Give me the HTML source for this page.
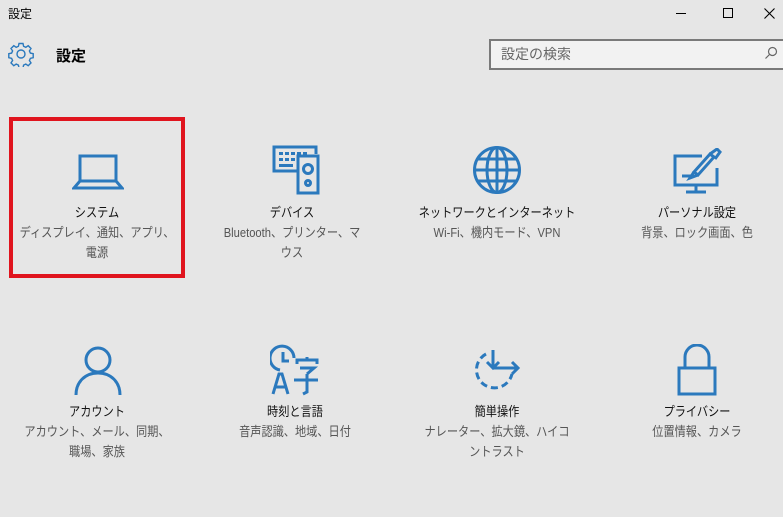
<!DOCTYPE html>
<html><head><meta charset="utf-8"><style>
*{margin:0;padding:0;box-sizing:border-box}
body{width:783px;height:517px;background:#e6e6e6;font-family:"Liberation Sans","Noto Sans CJK JP",sans-serif;position:relative;overflow:hidden;color:#000}
.a{position:absolute}
.item{position:absolute;width:190px;text-align:center;font-size:13px;line-height:20px;white-space:nowrap;transform:scaleX(.86);transform-origin:50% 0}
.item .t{color:#111}
.item .s{color:#555}
svg{position:absolute}
</style></head><body>
<div class="a" style="left:8px;top:5px;font-size:12px">設定</div>
<div class="a" style="left:676px;top:13px;width:10px;height:1px;background:#000"></div>
<div class="a" style="left:723px;top:8px;width:10px;height:10px;border:1px solid #000"></div>
<svg style="left:764px;top:8px" width="11" height="11" viewBox="0 0 11 11"><path d="M0.5 0.5L10.5 10.5M10.5 0.5L0.5 10.5" stroke="#000" stroke-width="1.1"/></svg>
<svg style="left:8px;top:41px" width="26" height="26" viewBox="0 0 26 26"><g fill="none" stroke="#2b79bd" stroke-width="1.4"><circle cx="13" cy="13" r="4"/><path d="M11 2.5h4l.6 2.8 2.2 1 2.4-1.6 2.8 2.8-1.6 2.4 1 2.2 2.8.6v4l-2.8.6-1 2.2 1.6 2.4-2.8 2.8-2.4-1.6-2.2 1-.6 2.8h-4l-.6-2.8-2.2-1-2.4 1.6-2.8-2.8 1.6-2.4-1-2.2-2.8-.6v-4l2.8-.6 1-2.2-1.6-2.4 2.8-2.8 2.4 1.6 2.2-1z"/></g></svg>
<div class="a" style="left:56px;top:45px;font-size:15px;font-weight:bold">設定</div>
<div class="a" style="left:489px;top:39px;width:300px;height:31px;border:2px solid #7a7a7a;background:#f2f2f2"></div>
<div class="a" style="left:501px;top:44px;font-size:14px;color:#666">設定の検索</div>
<svg style="left:764px;top:46px" width="14" height="14" viewBox="0 0 14 14"><g fill="none" stroke="#666" stroke-width="1.2"><circle cx="8.5" cy="5.5" r="4"/><path d="M5.5 8.5L1.5 12.5"/></g></svg>
<div class="a" style="left:9px;top:117px;width:176px;height:161px;border:4px solid #e0141e"></div>

<svg style="left:72px;top:153px" width="52" height="38" viewBox="0 0 52 38"><g fill="none" stroke="#2b79bd" stroke-width="3"><rect x="8" y="3" width="36" height="25"/><path d="M8 28L2 35h48l-6-7"/></g></svg>
<svg style="left:271px;top:144px" width="54" height="52" viewBox="0 0 54 52"><g fill="none" stroke="#2b79bd" stroke-width="3"><path d="M27 27H3V3h42v7"/><rect x="27" y="12" width="20" height="37"/><circle cx="37" cy="25" r="4.5"/><circle cx="37" cy="39" r="2.5"/></g><g fill="#2b79bd"><rect x="8" y="8" width="4" height="3"/><rect x="14" y="8" width="4" height="3"/><rect x="20" y="8" width="4" height="3"/><rect x="26" y="8" width="4" height="3"/><rect x="32" y="8" width="4" height="3"/><rect x="8" y="14" width="4" height="3"/><rect x="14" y="14" width="4" height="3"/><rect x="20" y="14" width="4" height="3"/><rect x="8" y="20" width="14" height="3"/></g></svg>
<svg style="left:472px;top:145px" width="50" height="50" viewBox="0 0 50 50"><g fill="none" stroke="#2b79bd" stroke-width="3"><circle cx="25" cy="25" r="22.5"/><ellipse cx="25" cy="25" rx="10" ry="22.5"/><path d="M2.5 25h45M6 14h38M6 36h38M25 2.5v45"/></g></svg>
<svg style="left:672px;top:148px" width="52" height="46" viewBox="0 0 52 46"><g fill="none" stroke="#2b79bd" stroke-width="3"><path d="M30 8H3v29h42V20"/><path d="M24 37v6M14 44h20"/><path d="M22 24l16-18 4 3-16 18z"/><path d="M38 6l7-5 3 3-5 7"/><path d="M22 24l-4 6 8-3M10 28h10"/></g></svg>

<svg style="left:73px;top:345px" width="50" height="52" viewBox="0 0 50 52"><g fill="none" stroke="#2b79bd" stroke-width="3"><circle cx="25" cy="15" r="12"/><path d="M3 50c0-13 9-22 22-22s22 9 22 22"/></g></svg>
<svg style="left:270px;top:344px" width="52" height="52" viewBox="0 0 52 52"><g fill="none" stroke="#2b79bd" stroke-width="3"><path d="M10 26A12 12 0 1 1 24 14"/><path d="M13 8v9h6"/><path d="M3 50l6-20h3l6 20M6 43h9"/><path d="M27 20v-4h20v4M37 13v3M30 24h14l-7 6M24 36h24M37 30v18l-4 2"/></g></svg>
<svg style="left:470px;top:348px" width="54" height="44" viewBox="0 0 54 44"><g fill="none" stroke="#2b79bd" stroke-width="3" stroke-dasharray="7 4"><path d="M16 6A18 18 0 1 0 42 26"/></g><g fill="none" stroke="#2b79bd" stroke-width="3"><path d="M23 2v18M17 14l6 6 6-6M23 20h24M42 14l6 6-6 6"/></g></svg>
<svg style="left:676px;top:344px" width="42" height="52" viewBox="0 0 42 52"><g fill="none" stroke="#2b79bd" stroke-width="3"><rect x="3" y="24" width="36" height="26"/><path d="M9 24V13a12 12 0 0 1 24 0v11"/></g></svg>

<div class="item" style="left:2px;top:203px"><div class="t">システム</div><div class="s">ディスプレイ、通知、アプリ、<br>電源</div></div>
<div class="item" style="left:197px;top:203px"><div class="t">デバイス</div><div class="s">Bluetooth、プリンター、マ<br>ウス</div></div>
<div class="item" style="left:402px;top:203px"><div class="t">ネットワークとインターネット</div><div class="s">Wi-Fi、機内モード、VPN</div></div>
<div class="item" style="left:602px;top:203px"><div class="t">パーソナル設定</div><div class="s">背景、ロック画面、色</div></div>

<div class="item" style="left:2px;top:402px"><div class="t">アカウント</div><div class="s">アカウント、メール、同期、<br>職場、家族</div></div>
<div class="item" style="left:200px;top:402px"><div class="t">時刻と言語</div><div class="s">音声認識、地域、日付</div></div>
<div class="item" style="left:402px;top:402px"><div class="t">簡単操作</div><div class="s">ナレーター、拡大鏡、ハイコ<br>ントラスト</div></div>
<div class="item" style="left:602px;top:402px"><div class="t">プライバシー</div><div class="s">位置情報、カメラ</div></div>
</body></html>
